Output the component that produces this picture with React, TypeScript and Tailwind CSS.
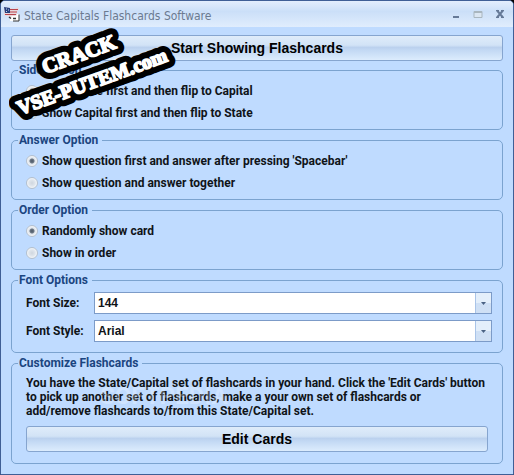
import { useState } from "react";

type OptionGroupProps = {
  title: string;
  name: string;
  options: string[];
  initial: number;
};

function Group({ title, className, children }: { title: string; className: string; children: React.ReactNode }) {
  return (
    <fieldset className={`min-w-0 rounded-[5px] border border-[#7ba3cf] ${className}`}>
      <legend className="-ml-2 pr-1 pl-px leading-4 text-[#1b4580]">{title}</legend>
      {children}
    </fieldset>
  );
}

function OptionGroup({ title, name, options, initial }: OptionGroupProps) {
  const [selected, setSelected] = useState(initial);

  return (
    <Group title={title} className="px-[14px] pt-[2px] pb-[5px]">
      {options.map((option, i) => (
        <label key={option} className="flex h-[22px] items-center gap-1">
          <input
            type="radio"
            name={name}
            checked={selected === i}
            onChange={() => setSelected(i)}
            className="size-3 appearance-none rounded-full border border-[#b4c0ce] bg-[radial-gradient(circle,#cfd6de_0px,#dfe5ec_3px,#f4f6f8_5px)] checked:bg-[radial-gradient(circle,#4c5866_0px,#6c7784_2px,#dfe5ec_3px,#f4f6f8_5px)]"
          />
          <span>{option}</span>
        </label>
      ))}
    </Group>
  );
}

function SelectRow({ id, label, options }: { id: string; label: string; options: string[] }) {
  return (
    <div className="flex items-center">
      <label htmlFor={id} className="w-[68px] shrink-0">
        {label}
      </label>
      <div className="relative min-w-0 flex-1">
        <select
          id={id}
          className="block h-[22px] w-full appearance-none border border-[#7c9bc8] bg-white pr-5 pl-[3px] font-['Liberation_Sans',Arial,sans-serif] font-bold outline-none"
        >
          {options.map((o) => (
            <option key={o}>{o}</option>
          ))}
        </select>
        <span className="pointer-events-none absolute inset-y-px right-px flex w-4 items-center justify-center border-l border-[#a9c4e8] bg-linear-to-b from-[#e4effb] from-50% to-[#cfe0f5] to-50%">
          <svg width="5" height="3" viewBox="0 0 5 3">
            <path d="M0 0h5L2.5 3z" fill="#4a6284" />
          </svg>
        </span>
      </div>
    </div>
  );
}

function BigButton({ children }: { children: string }) {
  return (
    <button
      type="button"
      className="h-[26px] w-full rounded-[3px] border border-[#86a5cf] bg-[linear-gradient(#dfecfa_0%,#d2e3f6_38%,#bbd1ee_48%,#c3d9f4_60%,#dcecfd_100%)] font-['Liberation_Sans',Arial,sans-serif] text-[14px] leading-6 font-bold text-black"
    >
      {children}
    </button>
  );
}

function AppIcon() {
  return (
    <svg width="16" height="16" viewBox="0 0 16 16" aria-hidden="true">
      <path d="M8 8h7v7H6v-2z" fill="#fff" />
      <path d="M15 8.500v6.500H9" fill="none" stroke="#333" />
      <path d="M0 1l6 1 4 1 4-2 1 2-2 3v3l-2 1-2 0-3 1-2-1-4-1z" fill="#e8d8dc" />
      <path d="M6 3.500h8M6 6h7M1 8.500h11" stroke="#b8434c" strokeWidth="1.2" />
      <path d="M0 1l6 1v5H1z" fill="#27407f" />
      <path d="M2 3h1M4 4h1M2 5.500h1" stroke="#c9d5ee" />
      <path d="M5 11l2 1.500M9 12.500h3" stroke="#333" strokeWidth="1.5" />
    </svg>
  );
}

function TitleBar() {
  return (
    <header className="flex h-[26px] items-center justify-between bg-linear-to-b from-[#e3eefd] via-[#cbdff8] via-40% to-[#e0edfd] pr-2 pl-[3px]">
      <div className="flex items-center gap-1">
        <AppIcon />
        <h1 className="pt-[3px] font-['DejaVu_Sans_Condensed','DejaVu_Sans',sans-serif] text-[12px] font-normal text-[#6b7a90]">
          State Capitals Flashcards Software
        </h1>
      </div>
      <div className="flex items-center gap-3 text-[#667a98]">
        <button type="button" aria-label="Minimize">
          <svg width="10" height="10" viewBox="0 0 10 10">
            <path d="M2 8h6" stroke="currentColor" strokeWidth="2" />
          </svg>
        </button>
        <button type="button" aria-label="Maximize" disabled>
          <svg width="10" height="10" viewBox="0 0 10 10">
            <path d="M1 2.500h8v6H1z" fill="#dbe6f2" stroke="#a9b6bf" />
            <path d="M1 3h8" stroke="#a9b6bf" strokeWidth="2" />
          </svg>
        </button>
        <button type="button" aria-label="Close">
          <svg width="10" height="10" viewBox="0 0 10 10">
            <path d="M2 1.500l6 7M8 1.500l-6 7" stroke="currentColor" strokeWidth="2" />
            <path d="M1 1.500h3M6 1.500h3M1 8.500h3M6 8.500h3" stroke="currentColor" />
          </svg>
        </button>
      </div>
    </header>
  );
}

function Sticker() {
  return (
    <svg
      className="pointer-events-none absolute top-6 left-2"
      width="180"
      height="104"
      viewBox="0 0 180 104"
      fontFamily="'Liberation Serif','Times New Roman',serif"
      fontWeight="700"
      strokeLinejoin="round"
    >
      {["#000", "#fff"].map((color) => (
        <g key={color} fill={color} stroke={color} strokeWidth={color === "#000" ? 14 : 1.8}>
          <text transform="translate(36 49) rotate(-20)" fontSize="21">
            CRACK
          </text>
          <text transform="translate(11 90) rotate(-20)" fontSize="20">
            VSE-PUTEM.com
          </text>
        </g>
      ))}
    </svg>
  );
}

export default function App() {
  return (
    <div className="bg-black">
      <main className="relative overflow-hidden rounded-t-[5px] border border-[#3f5f96] bg-[#bfdbff] font-[Roboto,'Liberation_Sans',sans-serif] text-[12px] font-bold text-[#101418]">
        <TitleBar />
        <div className="px-[10px] pt-2 pb-[10px]">
          <BigButton>Start Showing Flashcards</BigButton>
          <div className="mt-px flex flex-col gap-[2px]">
            <OptionGroup
              title="Side Option"
              name="side"
              options={["Show State first and then flip to Capital", "Show Capital first and then flip to State"]}
              initial={0}
            />
            <OptionGroup
              title="Answer Option"
              name="answer"
              options={["Show question first and answer after pressing 'Spacebar'", "Show question and answer together"]}
              initial={0}
            />
            <OptionGroup title="Order Option" name="order" options={["Randomly show card", "Show in order"]} initial={0} />
            <Group title="Font Options" className="pt-1 pr-[10px] pb-[10px] pl-[14px]">
              <div className="flex flex-col gap-[6px]">
                <SelectRow id="font-size" label="Font Size:" options={["144", "120", "96", "72"]} />
                <SelectRow id="font-style" label="Font Style:" options={["Arial", "Tahoma", "Verdana"]} />
              </div>
            </Group>
            <Group title="Customize Flashcards" className="px-[14px] pt-[5px] pb-[11px]">
              <p className="relative mb-2 leading-[14px]">
                You have the State/Capital set of flashcards in your hand. Click the 'Edit Cards' button to pick up another
                set of flashcards, make a your own set of flashcards or add/remove flashcards to/from this State/Capital set.
                <span className="pointer-events-none absolute top-2 left-[74px] text-[24px] leading-6 text-white/25">
                  SOFTPEDIA
                </span>
              </p>
              <BigButton>Edit Cards</BigButton>
            </Group>
          </div>
        </div>
        <Sticker />
      </main>
    </div>
  );
}
